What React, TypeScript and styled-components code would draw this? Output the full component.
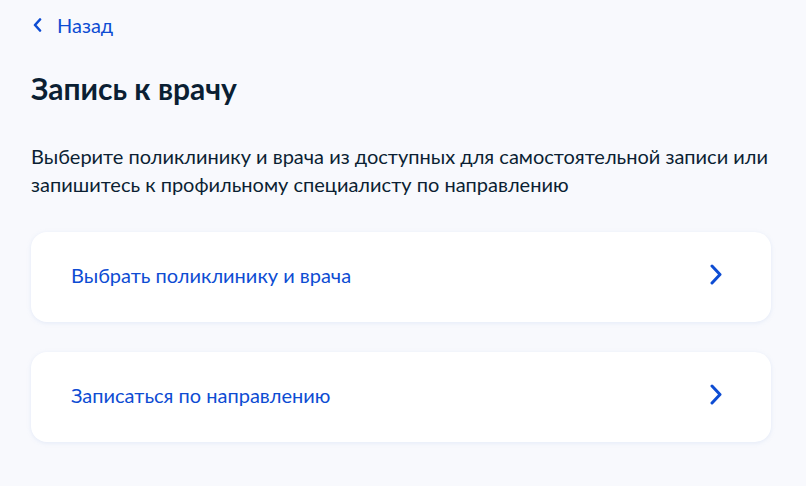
import React from "react";
import styled, { createGlobalStyle } from "styled-components";

const Global = createGlobalStyle`
  html, body { margin: 0; padding: 0; background: #f8f9fd; }
  body { font-family: Lato, "Noto Sans", sans-serif; -webkit-font-smoothing: antialiased; }
`;

const Page = styled.div`
  width: 806px;
  min-height: 486px;
  box-sizing: border-box;
  padding: 11px 35px 0 31px;
  background: #f8f9fd;
  color: #0b1f33;
`;

const Back = styled.a`
  display: inline-flex;
  align-items: center;
  gap: 15px;
  color: #0d4cd3;
  font-size: 20px;
  line-height: 28px;
  text-decoration: none;
  padding-left: 2px;
`;

const Title = styled.h1`
  margin: 31px 0 0;
  font-size: 30px;
  line-height: 36px;
  font-weight: 700;
`;

const Lead = styled.p`
  margin: 36px 0 0;
  font-size: 20px;
  line-height: 28px;
`;

const List = styled.div`
  display: flex;
  flex-direction: column;
  gap: 30px;
  margin-top: 34px;
`;

const Card = styled.a`
  display: flex;
  align-items: center;
  justify-content: space-between;
  height: 90px;
  box-sizing: border-box;
  padding: 0 49px 4px 40px;
  background: #fff;
  border-radius: 16px;
  box-shadow: 0 1px 4px rgba(168, 190, 232, 0.25);
  color: #0d4cd3;
  font-size: 20px;
  text-decoration: none;
`;

const Arrow = styled.svg`
  margin-bottom: 2px;
  flex-shrink: 0;
`;

const ChevronRight = () => (
  <Arrow width="12" height="21" viewBox="0 0 12 21" fill="none">
    <path d="M2 2l8 8.5L2 19" stroke="#0d4cd3" strokeWidth="3" strokeLinecap="round" strokeLinejoin="round" />
  </Arrow>
);

const ChevronLeft = () => (
  <svg width="9" height="14" viewBox="0 0 9 14" fill="none">
    <path d="M7 1.5L2 7l5 5.5" stroke="#0d4cd3" strokeWidth="2.6" strokeLinecap="round" strokeLinejoin="round" />
  </svg>
);

export default function App() {
  return (
    <>
      <Global />
      <Page>
        <Back href="#">
          <ChevronLeft />
          Назад
        </Back>
        <Title>Запись к врачу</Title>
        <Lead>
          Выберите поликлинику и врача из доступных для самостоятельной записи или запишитесь к профильному
          специалисту по направлению
        </Lead>
        <List>
          <Card href="#">
            Выбрать поликлинику и врача
            <ChevronRight />
          </Card>
          <Card href="#">
            Записаться по направлению
            <ChevronRight />
          </Card>
        </List>
      </Page>
    </>
  );
}
